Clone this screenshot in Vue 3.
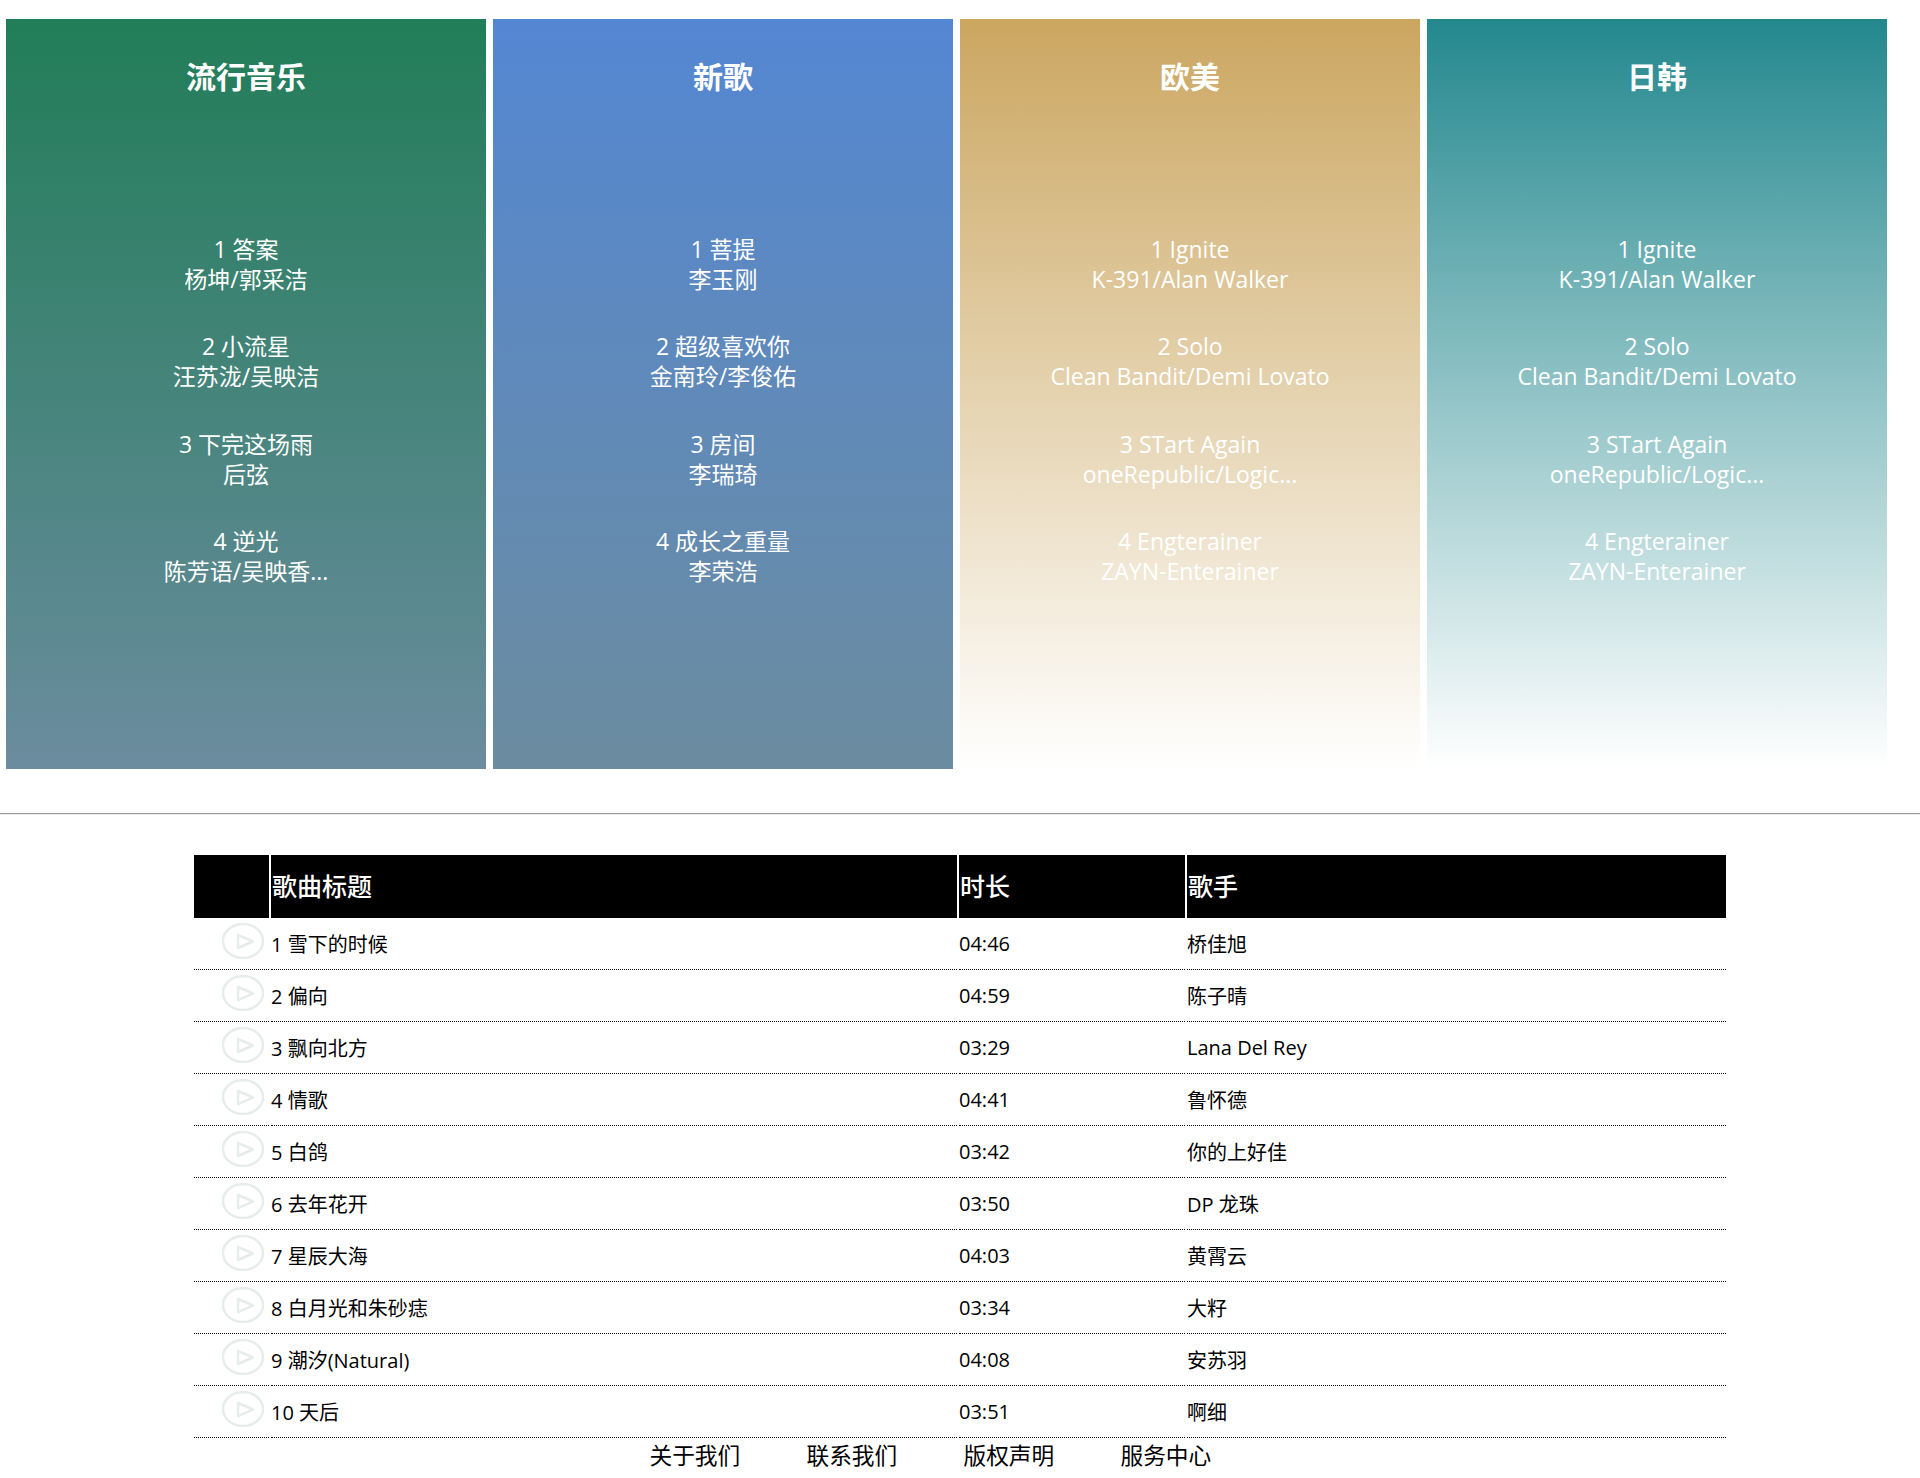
<script setup>
// chart cards on top of the page
const charts = [
  {
    title: "流行音乐",
    theme: "green",
    songs: [
      ["1 答案", "杨坤/郭采洁"],
      ["2 小流星", "汪苏泷/吴映洁"],
      ["3 下完这场雨", "后弦"],
      ["4 逆光", "陈芳语/吴映香..."],
    ],
  },
  {
    title: "新歌",
    theme: "blue",
    songs: [
      ["1 菩提", "李玉刚"],
      ["2 超级喜欢你", "金南玲/李俊佑"],
      ["3 房间", "李瑞琦"],
      ["4 成长之重量", "李荣浩"],
    ],
  },
  {
    title: "欧美",
    theme: "gold",
    songs: [
      ["1 Ignite", "K-391/Alan Walker"],
      ["2 Solo", "Clean Bandit/Demi Lovato"],
      ["3 STart Again", "oneRepublic/Logic..."],
      ["4 Engterainer", "ZAYN-Enterainer"],
    ],
  },
  {
    title: "日韩",
    theme: "teal",
    songs: [
      ["1 Ignite", "K-391/Alan Walker"],
      ["2 Solo", "Clean Bandit/Demi Lovato"],
      ["3 STart Again", "oneRepublic/Logic..."],
      ["4 Engterainer", "ZAYN-Enterainer"],
    ],
  },
];

// song table rows
const tracks = [
  { name: "1 雪下的时候", time: "04:46", singer: "桥佳旭" },
  { name: "2 偏向", time: "04:59", singer: "陈子晴" },
  { name: "3 飘向北方", time: "03:29", singer: "Lana Del Rey" },
  { name: "4 情歌", time: "04:41", singer: "鲁怀德" },
  { name: "5 白鸽", time: "03:42", singer: "你的上好佳" },
  { name: "6 去年花开", time: "03:50", singer: "DP 龙珠" },
  { name: "7 星辰大海", time: "04:03", singer: "黄霄云" },
  { name: "8 白月光和朱砂痣", time: "03:34", singer: "大籽" },
  { name: "9 潮汐(Natural)", time: "04:08", singer: "安苏羽" },
  { name: "10 天后", time: "03:51", singer: "啊细" },
];

const links = ["关于我们", "联系我们", "版权声明", "服务中心"];
</script>

<template>
  <div class="page">
    <section class="charts">
      <div v-for="chart in charts" :key="chart.title" class="chart" :class="chart.theme">
        <h2 class="chart-title">{{ chart.title }}</h2>
        <div v-for="song in chart.songs" :key="song[0]" class="chart-song">
          <p>{{ song[0] }}</p>
          <p>{{ song[1] }}</p>
        </div>
      </div>
    </section>

    <hr class="divider" />

    <table class="tracks">
      <thead>
        <tr>
          <th class="col-play"></th>
          <th class="col-name">歌曲标题</th>
          <th class="col-time">时长</th>
          <th class="col-singer">歌手</th>
        </tr>
      </thead>
      <tbody>
        <tr v-for="track in tracks" :key="track.name">
          <td class="play-cell">
            <svg class="play" width="42" height="36" viewBox="0 0 42 36">
              <ellipse cx="21" cy="18" rx="20" ry="17" fill="none" stroke="#e6edea" stroke-width="2.500" />
              <path d="M16 12 L31 18.500 L16 25 Z" fill="none" stroke="#e6edea" stroke-width="2.500" stroke-linejoin="round" />
            </svg>
          </td>
          <td>{{ track.name }}</td>
          <td>{{ track.time }}</td>
          <td>{{ track.singer }}</td>
        </tr>
      </tbody>
    </table>

    <nav class="links">
      <a v-for="link in links" :key="link">{{ link }}</a>
    </nav>
  </div>
</template>

<style>
body {
  margin: 0;
  background: #fff;
}
</style>

<style scoped>
.page {
  height: 1478px;
  overflow: hidden;
  font-family: "Open Sans", "Noto Sans CJK SC", sans-serif;
  color: #000;
}

.charts {
  display: grid;
  grid-template-columns: 480px 460px 460px 460px;
  gap: 7px;
  padding: 19px 0 0 6px;
}

.chart {
  height: 750px;
  color: #fff;
  text-align: center;
}

.green {
  background: linear-gradient(#217d58, #6b8c9f);
}

.blue {
  background: linear-gradient(#5487d3, #6b8c9f);
}

.gold {
  background: linear-gradient(#cba660, #fff);
}

.teal {
  background: linear-gradient(#23888e, #fff);
}

.chart-title {
  margin: 0 0 137px;
  padding-top: 38px;
  font-size: 30px;
  line-height: 40px;
  font-weight: 700;
}

.chart-song {
  margin-bottom: 37.400px;
  font-size: 23px;
  line-height: 30px;
}

.chart-song p {
  margin: 0;
}

.divider {
  margin: 44px 0 40px;
  border: 0;
  border-top: 1px solid #9a9a9a;
  border-bottom: 1px solid #eee;
}

.tracks {
  width: 1532px;
  margin: 0 auto;
  border-collapse: collapse;
  table-layout: fixed;
  font-size: 20px;
}

.tracks th {
  box-sizing: border-box;
  height: 63px;
  padding: 0 0 3px 1px;
  border-left: 2px solid #fff;
  background: #000;
  color: #fff;
  font-size: 25px;
  font-weight: 500;
  text-align: left;
}

.tracks th.col-play {
  width: 76px;
  border-left: 0;
}

.col-name {
  width: 688px;
}

.col-time {
  width: 228px;
}

.tracks td {
  box-sizing: border-box;
  height: 52px;
  padding: 1px 0 0;
  border-left: 2px solid #fff;
  border-bottom: 1px dotted #000;
}

.tracks tbody tr:first-child td {
  height: 51px;
}

.tracks td.play-cell {
  padding: 0;
  border-left: 0;
}

.play {
  display: block;
  margin: -5px 0 0 28px;
}

.links {
  display: flex;
  justify-content: center;
  padding-left: 7px;
  font-size: 22.700px;
  line-height: 35px;
}

.links a {
  width: 157px;
}
</style>
